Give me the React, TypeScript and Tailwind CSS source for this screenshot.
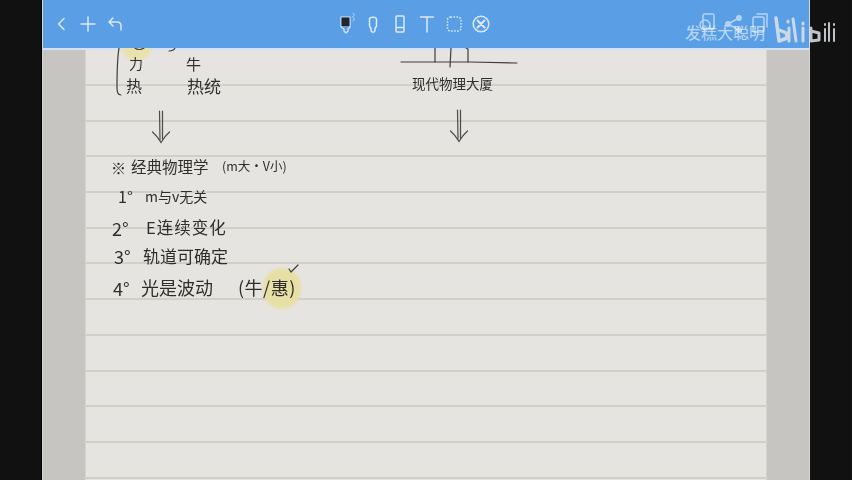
import React from 'react';

const rows = Array.from({ length: 12 }, (_, i) => i);

const ToolIcon: React.FC<{ children: React.ReactNode }> = ({ children }) => (
  <svg width="24" height="24" viewBox="0 0 24 24" fill="none" stroke="currentColor" strokeWidth="1.5" strokeLinecap="round" strokeLinejoin="round" className="shrink-0">
    {children}
  </svg>
);

const Arrow: React.FC<{ className: string }> = ({ className }) => (
  <svg width="20" height="34" viewBox="0 0 20 34" fill="none" stroke="#4a4a48" strokeWidth="1.2" strokeLinecap="round" className={className}>
    <path d="M8.5 1 L9 30" />
    <path d="M11.5 1 L11.5 29" />
    <path d="M1.5 22 C5 25 8 29 10 32.5 C12 29 15 25 18.5 22" />
  </svg>
);

const App: React.FC = () => {
  return (
    <div className="relative flex h-[480px] w-[852px] overflow-hidden bg-[#111111] font-['Noto_Sans_CJK_SC','Noto_Sans',sans-serif]">
      <div className="w-[42px] shrink-0 border-r border-black" />
      <main className="flex min-w-0 flex-1 flex-col border-x border-[#d8d7d3]">
        {/* Top toolbar */}
        <header className="z-20 flex h-[48px] shrink-0 items-center bg-[#5a9fe6] text-[#dbe9f8]">
          <div className="flex w-[291px] shrink-0 gap-[3px] pl-[6px]">
            <ToolIcon><path d="M15 6.5 L9.5 12 L15 17.5" /></ToolIcon>
            <ToolIcon><path d="M12 5 V19 M5 12 H19" /></ToolIcon>
            <ToolIcon><path d="M10 6 L6 10 L10 14 M6 10 H14 C17 10 18 12 18 14 V18" /></ToolIcon>
          </div>
          <div className="flex shrink-0 gap-[3px]">
            <ToolIcon>
              <path d="M7 5 H16 V15 L14 17 V19 L12 21 L10 19 V17 L7 15 Z" strokeWidth="1.2" />
              <rect x="7.5" y="5.5" width="8" height="8.5" fill="#22262b" stroke="none" />
              <path d="M19 1 L20.5 3 L18.5 5 L20.5 7 L19 9" strokeWidth="0.7" />
            </ToolIcon>
            <ToolIcon>
              <path d="M8.5 7 C8.5 4.5 15.5 4.5 15.5 7 V14 L14 16.5 V19 L12 20.5 L10 19 V16.5 L8.5 14 Z" />
            </ToolIcon>
            <ToolIcon>
              <path d="M8 5 C8 4.5 8.5 4 9 4 H15 C15.5 4 16 4.5 16 5 V19 C16 19.5 15.5 20 15 20 H9 C8.5 20 8 19.5 8 19 Z M8 15.5 H16" />
            </ToolIcon>
            <ToolIcon><path d="M5.5 5 H18.5 M12 5 V20" /></ToolIcon>
            <ToolIcon>
              <rect x="5.5" y="5" width="13.5" height="14" rx="3" strokeDasharray="1.6 1.4" strokeLinecap="butt" />
            </ToolIcon>
            <ToolIcon>
              <circle cx="12" cy="12" r="7.8" />
              <path d="M8.5 8.5 L15.5 15.5 M15.5 8.5 L8.5 15.5" strokeWidth="2" />
            </ToolIcon>
          </div>
          <div className="ml-auto flex shrink-0 gap-[2px] pr-[37px] opacity-70">
            <ToolIcon>
              <rect x="7" y="2" width="11" height="15" rx="1.5" />
              <circle cx="9" cy="13" r="5" />
            </ToolIcon>
            <ToolIcon>
              <circle cx="6" cy="12" r="2.2" fill="currentColor" />
              <circle cx="17" cy="6" r="2.2" fill="currentColor" />
              <circle cx="17" cy="18" r="2.2" fill="currentColor" />
              <path d="M6 12 L17 6 M6 12 L17 18" />
            </ToolIcon>
            <ToolIcon>
              <rect x="5" y="5" width="11" height="15" rx="1.5" />
              <path d="M9 2 H19 V15" />
            </ToolIcon>
          </div>
        </header>
        <div className="h-[2px] shrink-0 bg-[#d3e3f5]" />

        {/* Paper between grey margins */}
        <div className="flex min-h-0 flex-1">
          <div className="w-[42px] shrink-0 bg-[#c6c5c1]" />
          <div className="min-w-0 flex-1 border-x border-[#d5d4d0] bg-[#e5e4e0]">
            {rows.map((r) => (
              <div key={r} className="h-[35.7px] border-b-2 border-[#d0cfca] first:h-[36px]" />
            ))}
          </div>
          <div className="w-[42px] shrink-0 bg-[#c6c5c1]" />
        </div>
      </main>
      <div className="w-[42px] shrink-0" />

      {/* Handwritten notes, free canvas */}
      <div className="absolute inset-0 z-10 text-[#2e2e2c] blur-[0.3px]">
        <div className="absolute left-[122px] top-[30px] h-[31px] w-[29px] rounded-full bg-[#e8e2ae] blur-[1px]" />
        <div className="absolute left-[263px] top-[268px] h-[41px] w-[38px] rounded-full bg-[#e7e0a6] blur-[1px]" />

        <svg width="852" height="480" viewBox="0 0 852 480" fill="none" stroke="#3c3c3a" strokeWidth="1.2" strokeLinecap="round" className="absolute left-0 top-0">
          <path d="M119 48 C117 60 117 75 117 88 C117 93 118 95 121 95" />
          <path d="M135 48 C137 50 141 50 144 48" />
          <path d="M169 51 C172 51 174 50 175 48" />
          <path d="M401 62 L470 62 L517 63" />
          <path d="M435 48 L435 62 M451 48 L450 67 M466 48 L468 49 L468 62" />
          <path d="M289 269 L291 272 L298 265" />
        </svg>

        <Arrow className="absolute left-[151px] top-[110px]" />
        <Arrow className="absolute left-[449px] top-[109px]" />

        <span className="absolute left-[129px] top-[56px] text-[14px] leading-none">力</span>
        <span className="absolute left-[186px] top-[56px] text-[15px] leading-none">牛</span>
        <span className="absolute left-[126px] top-[77px] text-[16px] leading-none">热</span>
        <span className="absolute left-[187px] top-[77px] text-[17px] leading-none">热统</span>

        <span className="absolute left-[412px] top-[77px] text-[13.5px] leading-none">现代物理大厦</span>

        <span className="absolute left-[111px] top-[160px] text-[15px] leading-none">※</span>
        <span className="absolute left-[131px] top-[159px] text-[15.5px] leading-none">经典物理学</span>
        <span className="absolute left-[222px] top-[160px] text-[12.5px] leading-none whitespace-nowrap">(m大·V小)</span>

        <span className="absolute left-[118px] top-[188px] text-[16px] leading-none">1°</span>
        <span className="absolute left-[145px] top-[189px] text-[14px] leading-none whitespace-nowrap">m与v无关</span>

        <span className="absolute left-[112px] top-[219px] text-[18px] leading-none">2°</span>
        <span className="absolute left-[146px] top-[219px] text-[16.5px] leading-none whitespace-nowrap tracking-[1px]">E连续变化</span>

        <span className="absolute left-[114px] top-[247px] text-[18px] leading-none">3°</span>
        <span className="absolute left-[143px] top-[247px] text-[17px] leading-none whitespace-nowrap">轨道可确定</span>

        <span className="absolute left-[113px] top-[279px] text-[18px] leading-none">4°</span>
        <span className="absolute left-[141px] top-[278px] text-[18px] leading-none whitespace-nowrap">光是波动</span>
        <span className="absolute left-[238px] top-[278px] text-[18px] leading-none whitespace-nowrap tracking-[0.5px]">(牛/惠)</span>
      </div>

      {/* Video watermark */}
      <div className="absolute left-[685px] top-[23px] z-30 text-[16px] leading-[18px] whitespace-nowrap text-white/60">发糕大聪明</div>
      <svg width="64" height="32" viewBox="0 0 64 32" fill="none" stroke="#dfe3e8" strokeWidth="3" strokeLinecap="round" strokeLinejoin="round" className="absolute left-[774px] top-[14px] z-30 opacity-85">
        <path d="M2 4 L5 27 L13 24 L12.5 19 L5 16" strokeWidth="3.5" />
        <path d="M15 14 L15 27 M14 7 L14 8" />
        <path d="M19 5 L22 27" />
        <path d="M29 14 L29 27 M29 9 L29 10" />
        <path d="M37 14 L37 27 L45 26 L45 19 L37 17" strokeWidth="3" />
        <path d="M51 15 L51 27 M51 10 L51 11" strokeWidth="2" />
        <path d="M55 9 L55 27" strokeWidth="2" />
        <path d="M60 15 L60 27 M60 10 L60 11" strokeWidth="2" />
      </svg>
    </div>
  );
};

export default App;
